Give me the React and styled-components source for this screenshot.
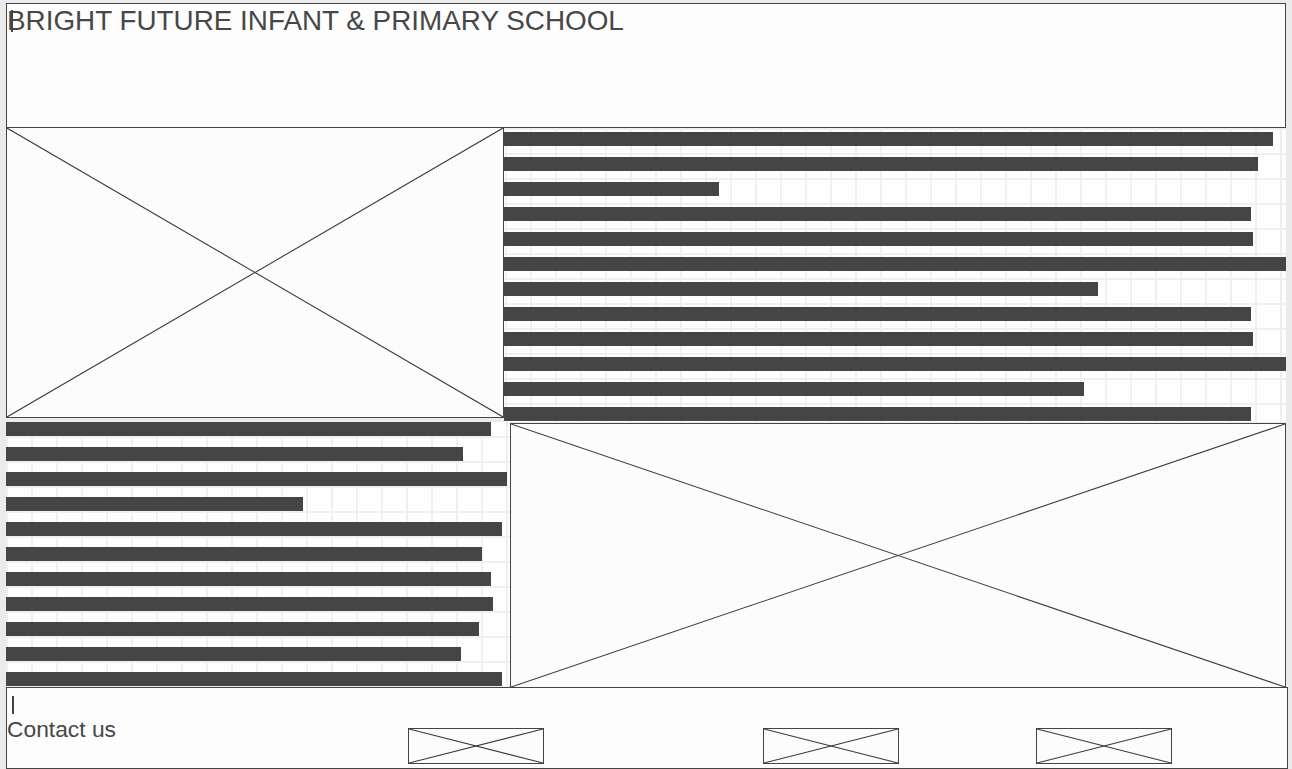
import React from 'react';
import styled, { createGlobalStyle } from 'styled-components';

const GlobalStyle = createGlobalStyle`
  html, body {
    margin: 0;
    padding: 0;
    background: #ebebeb;
    font-family: "Liberation Sans", Arial, sans-serif;
    color: #444;
  }
  * {
    box-sizing: border-box;
  }
`;

const INTRO_BARS = [769, 754, 215, 747, 749, 790, 594, 747, 749, 790, 580, 747];
const STORY_BARS = [485, 457, 501, 297, 496, 476, 485, 487, 473, 455, 496];
const LINK_BOXES = [
  { id: 'facebook', gap: 0 },
  { id: 'twitter', gap: 219 },
  { id: 'email', gap: 137 },
];

const Page = styled.div`
  width: 1292px;
  height: 769px;
  overflow: hidden;
  padding: 3px 6px 0 6px;
`;

const Header = styled.header`
  position: relative;
  height: 125px;
  border: 1px solid #444;
  background: #fdfdfd;
  padding-top: 3px;
`;

const Title = styled.h1`
  margin: 0;
  font-size: 27.85px;
  font-weight: normal;
  line-height: 1;
  color: #474747;
  white-space: nowrap;
`;

const Caret = styled.span`
  position: absolute;
  left: ${(p) => p.$left}px;
  top: ${(p) => p.$top}px;
  width: ${(p) => p.$thick || 1}px;
  height: ${(p) => p.$height}px;
  background: #444;
`;

const Row = styled.section`
  display: flex;
  align-items: flex-start;
  height: ${(p) => p.$height}px;
`;

const Placeholder = styled.div`
  flex: none;
  width: ${(p) => p.$w}px;
  height: ${(p) => p.$h}px;
  margin-top: ${(p) => p.$top || 0}px;
  border: 1px solid #444;
  background: #fcfcfc;

  svg {
    display: block;
    width: 100%;
    height: 100%;
  }
`;

const TextBlock = styled.div`
  flex: none;
  width: ${(p) => p.$w}px;
  height: 100%;
  overflow: hidden;
  padding-top: ${(p) => p.$pad}px;
  display: flex;
  flex-direction: column;
  gap: 11px;
  background-color: #fefefe;
  background-image:
    linear-gradient(to right, #f0f0f0 2px, transparent 2px),
    linear-gradient(to bottom, #f0f0f0 2px, transparent 2px);
  background-size: 25px 25px;
  background-position: ${(p) => p.$gx}px ${(p) => p.$gy}px;
`;

const Line = styled.div`
  flex: none;
  height: 14px;
  width: ${(p) => p.$w}px;
  background: #454545;
`;

const Footer = styled.footer`
  position: relative;
  display: flex;
  align-items: flex-start;
  width: 1282px;
  height: 82px;
  border: 1px solid #444;
  background: #fdfdfd;
`;

const ContactCol = styled.div`
  width: 401px;
  flex: none;
  padding-top: 28px;
`;

const ContactText = styled.div`
  font-size: 22.8px;
  line-height: 26px;
  color: #474747;
`;

const LinkBox = styled.div`
  flex: none;
  width: 136px;
  height: 36px;
  margin-top: 40px;
  margin-left: ${(p) => p.$gap}px;
  border: 1px solid #444;
  background: #fcfcfc;

  svg {
    display: block;
    width: 100%;
    height: 100%;
  }
`;

const Cross = () => (
  <svg viewBox="0 0 100 100" preserveAspectRatio="none">
    <line x1="0" y1="0" x2="100" y2="100" stroke="#3c3c3c" strokeWidth="1.1" vectorEffect="non-scaling-stroke" />
    <line x1="100" y1="0" x2="0" y2="100" stroke="#3c3c3c" strokeWidth="1.1" vectorEffect="non-scaling-stroke" />
  </svg>
);

const App = () => (
  <>
    <GlobalStyle />
    <Page>
      <Header>
        <Title>BRIGHT FUTURE INFANT &amp; PRIMARY SCHOOL</Title>
        <Caret $left={4} $top={6} $height={22} $thick={1.5} />
      </Header>

      <Row $height={294}>
        <Placeholder $w={498} $h={291} $top={-1}>
          <Cross />
        </Placeholder>
        <TextBlock $w={782} $pad={4} $gx={1} $gy={0}>
          {INTRO_BARS.map((w, i) => (
            <Line key={i} $w={w} />
          ))}
        </TextBlock>
      </Row>

      <Row $height={265}>
        <TextBlock $w={504} $pad={0} $gx={0} $gy={14}>
          {STORY_BARS.map((w, i) => (
            <Line key={i} $w={w} />
          ))}
        </TextBlock>
        <Placeholder $w={776} $h={265} $top={1}>
          <Cross />
        </Placeholder>
      </Row>

      <Footer>
        <Caret $left={5} $top={8} $height={18} $thick={2} />
        <ContactCol>
          <ContactText>Contact us</ContactText>
        </ContactCol>
        {LINK_BOXES.map((b) => (
          <LinkBox key={b.id} $gap={b.gap}>
            <Cross />
          </LinkBox>
        ))}
      </Footer>
    </Page>
  </>
);

export default App;
